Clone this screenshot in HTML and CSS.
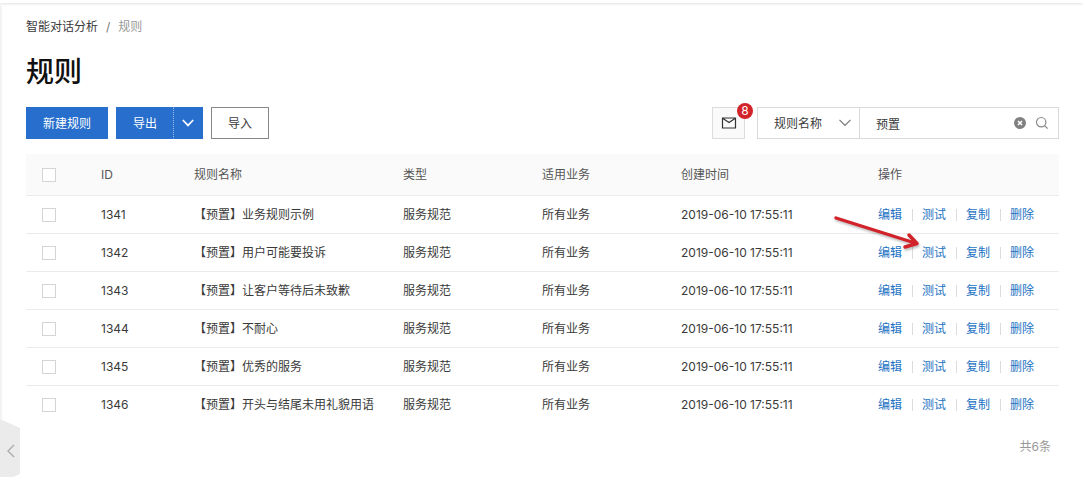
FILE: index.html
```html
<!DOCTYPE html>
<html lang="zh-CN">
<head>
    <meta charset="utf-8">
    <title>规则 - 智能对话分析</title>
    <link rel="stylesheet" href="styles.css">
</head>
<body>
    <div class="topbar"></div>
    <main class="page">
        <nav class="breadcrumb">
            <a href="#">智能对话分析</a>
            <span class="slash">/</span>
            <span>规则</span>
        </nav>

        <h1>规则</h1>

        <div class="toolbar">
            <button type="button" class="btn btn-primary">新建规则</button>
            <div class="split">
                <button type="button" class="btn btn-primary btn-export">导出</button>
                <button type="button" class="btn btn-primary btn-arrow" aria-label="更多导出">
                    <svg width="12" height="8" viewBox="0 0 12 8"><path d="M.8 1l5.200 5.400L11.200 1" fill="none" stroke="#fff" stroke-width="1.700"/></svg>
                </button>
            </div>
            <button type="button" class="btn btn-default">导入</button>

            <button type="button" class="btn-mail" aria-label="消息">
                <svg width="16" height="12" viewBox="0 0 16 12"><path d="M1.500 1h13v10h-13zM2 1.500L8 5.500l6-4" fill="none" stroke="#333" stroke-width="1.200"/></svg>
                <span class="badge">8</span>
            </button>

            <form class="search">
                <div class="select-box">
                    <select aria-label="搜索字段">
                        <option>规则名称</option>
                    </select>
                    <svg class="caret" width="12" height="8" viewBox="0 0 12 8"><path d="M.5 .8L6 6.500 11.500 .8" fill="none" stroke="#777" stroke-width="1.200"/></svg>
                </div>
                <div class="input-box">
                    <input type="text" value="预置" aria-label="关键词">
                    <button type="button" class="icon-btn" aria-label="清空">
                        <svg width="12" height="12" viewBox="0 0 12 12"><circle cx="6" cy="6" r="6" fill="#808080"/><path d="M4 4l4 4M8 4L4 8" stroke="#fff" stroke-width="1.600"/></svg>
                    </button>
                    <button type="button" class="icon-btn" aria-label="搜索">
                        <svg width="14" height="14" viewBox="0 0 14 14"><circle cx="6.200" cy="6.200" r="4.700" fill="none" stroke="#888" stroke-width="1.200"/><path d="M9.600 9.600l3 3" stroke="#888" stroke-width="1.300"/></svg>
                    </button>
                </div>
            </form>
        </div>

        <table class="rules">
            <colgroup>
                <col class="col-check">
                <col class="col-id">
                <col class="col-name">
                <col class="col-type">
                <col class="col-biz">
                <col class="col-time">
                <col class="col-ops">
            </colgroup>
            <thead>
                <tr>
                    <th><input type="checkbox" aria-label="全选"></th>
                    <th>ID</th>
                    <th>规则名称</th>
                    <th>类型</th>
                    <th>适用业务</th>
                    <th>创建时间</th>
                    <th>操作</th>
                </tr>
            </thead>
            <tbody>
                <tr>
                    <td><input type="checkbox" aria-label="1341"></td>
                    <td>1341</td>
                    <td>【预置】业务规则示例</td>
                    <td>服务规范</td>
                    <td>所有业务</td>
                    <td>2019-06-10 17:55:11</td>
                    <td><div class="ops"><a href="#">编辑</a><a href="#">测试</a><a href="#">复制</a><a href="#">删除</a></div></td>
                </tr>
                <tr>
                    <td><input type="checkbox" aria-label="1342"></td>
                    <td>1342</td>
                    <td>【预置】用户可能要投诉</td>
                    <td>服务规范</td>
                    <td>所有业务</td>
                    <td>2019-06-10 17:55:11</td>
                    <td class="marked">
                        <div class="ops"><a href="#">编辑</a><a href="#">测试</a><a href="#">复制</a><a href="#">删除</a></div>
                        <svg class="pointer" width="92" height="40" viewBox="0 0 92 40"><path d="M6 6L85 31M79 23L87 31.500L75 35" fill="none" stroke="#d2232a" stroke-width="3.400" stroke-linecap="round" stroke-linejoin="round"/></svg>
                    </td>
                </tr>
                <tr>
                    <td><input type="checkbox" aria-label="1343"></td>
                    <td>1343</td>
                    <td>【预置】让客户等待后未致歉</td>
                    <td>服务规范</td>
                    <td>所有业务</td>
                    <td>2019-06-10 17:55:11</td>
                    <td><div class="ops"><a href="#">编辑</a><a href="#">测试</a><a href="#">复制</a><a href="#">删除</a></div></td>
                </tr>
                <tr>
                    <td><input type="checkbox" aria-label="1344"></td>
                    <td>1344</td>
                    <td>【预置】不耐心</td>
                    <td>服务规范</td>
                    <td>所有业务</td>
                    <td>2019-06-10 17:55:11</td>
                    <td><div class="ops"><a href="#">编辑</a><a href="#">测试</a><a href="#">复制</a><a href="#">删除</a></div></td>
                </tr>
                <tr>
                    <td><input type="checkbox" aria-label="1345"></td>
                    <td>1345</td>
                    <td>【预置】优秀的服务</td>
                    <td>服务规范</td>
                    <td>所有业务</td>
                    <td>2019-06-10 17:55:11</td>
                    <td><div class="ops"><a href="#">编辑</a><a href="#">测试</a><a href="#">复制</a><a href="#">删除</a></div></td>
                </tr>
                <tr>
                    <td><input type="checkbox" aria-label="1346"></td>
                    <td>1346</td>
                    <td>【预置】开头与结尾未用礼貌用语</td>
                    <td>服务规范</td>
                    <td>所有业务</td>
                    <td>2019-06-10 17:55:11</td>
                    <td><div class="ops"><a href="#">编辑</a><a href="#">测试</a><a href="#">复制</a><a href="#">删除</a></div></td>
                </tr>
            </tbody>
        </table>

        <div class="total">共6条</div>
    </main>

    <button type="button" class="collapse" aria-label="展开菜单">
        <svg width="8" height="14" viewBox="0 0 8 14"><path d="M7 1L1 7l6 6" fill="none" stroke="#b0b0b0" stroke-width="1.500"/></svg>
    </button>
</body>
</html>
```

FILE: styles.css
```css
* {
    box-sizing: border-box;
}

body {
    margin: 0;
    background: #fff;
    color: #3a3a3a;
    font-family: Inter, "Noto Sans CJK SC", sans-serif;
    font-size: 12px;
    line-height: 18px;
}

button, input, select {
    font: inherit;
    color: inherit;
    margin: 0;
}

button {
    cursor: pointer;
}

a {
    color: #2272c3;
    text-decoration: none;
}

svg {
    display: block;
}

.topbar {
    height: 3px;
    background: #fff;
    box-shadow: 0 1px 3px rgba(0, 0, 0, 0.12);
}

.page {
    border-left: 2px solid #f3f3f3;
    padding: 15px 24px 20px;
}

.breadcrumb {
    display: flex;
    gap: 8px;
    color: #999;
}

.breadcrumb a {
    color: #3a3a3a;
}

.slash {
    color: #777;
}

h1 {
    margin: 16px 0 14px;
    font-size: 28px;
    font-weight: 500;
    line-height: 41px;
    color: #111;
}

.toolbar {
    display: flex;
    align-items: center;
    gap: 8px;
    margin-bottom: 15px;
}

.btn {
    height: 32px;
    padding: 1px 16px 0;
    border: 1px solid #888;
    border-radius: 0;
    background: #fff;
}

.btn-primary {
    border-color: #286fcd;
    background: #286fcd;
    color: #fff;
}

.split {
    display: flex;
}

.btn-export {
    border-right: 0;
}

.btn-arrow {
    padding: 0 8px;
    border-left: 1px dotted #9dbfec;
}

.btn-mail {
    position: relative;
    display: flex;
    align-items: center;
    justify-content: center;
    width: 33px;
    height: 32px;
    margin-left: auto;
    margin-right: 4px;
    padding: 0;
    border: 1px solid #dcdcdc;
    background: #fafafa;
}

.badge {
    position: absolute;
    top: -5px;
    right: -9px;
    width: 16px;
    height: 16px;
    border-radius: 8px;
    background: #d2232a;
    color: #fff;
    line-height: 16px;
    text-align: center;
}

.search {
    display: flex;
    height: 32px;
    border: 1px solid #d9d9d9;
}

.select-box {
    position: relative;
    border-right: 1px solid #d9d9d9;
}

.select-box select {
    appearance: none;
    width: 101px;
    height: 30px;
    padding: 1px 16px 0;
    border: 0;
    border-radius: 0;
    background: transparent;
}

.caret {
    position: absolute;
    top: 11px;
    right: 8px;
    pointer-events: none;
}

.input-box {
    display: flex;
    align-items: center;
    gap: 9px;
    padding: 0 9px 0 16px;
}

.input-box input {
    width: 129px;
    height: 30px;
    padding: 0;
    border: 0;
    outline: 0;
    background: transparent;
}

.icon-btn {
    padding: 0;
    border: 0;
    background: none;
}

.rules {
    width: 100%;
    table-layout: fixed;
    border-collapse: separate;
    border-spacing: 0;
}

.col-check { width: 59px; }
.col-id { width: 93px; }
.col-name { width: 209px; }
.col-type { width: 139px; }
.col-biz { width: 139px; }
.col-time { width: 197px; }
.col-ops { width: 197px; }

.rules th,
.rules td {
    height: 38px;
    padding: 0 16px;
    border-bottom: 1px solid #ebebeb;
    text-align: left;
    white-space: nowrap;
}

.rules th {
    height: 42px;
    background: #fafafa;
    color: #555;
    font-weight: 400;
}

.rules tbody tr:last-child td {
    border-bottom: 0;
}

.rules input {
    appearance: none;
    display: block;
    width: 14px;
    height: 14px;
    border: 1px solid #d5d5d5;
    background: #fff;
}

.rules input:checked {
    background: #286fcd;
}

.ops {
    display: flex;
    align-items: center;
}

.ops a + a {
    margin-left: 10px;
    padding-left: 9px;
    border-left: 1px solid #dcdcdc;
    line-height: 12px;
}

.marked {
    position: relative;
}

.pointer {
    position: absolute;
    top: -22px;
    left: -32px;
    filter: drop-shadow(1px 2px 1px rgba(0, 0, 0, 0.25));
    pointer-events: none;
}

.total {
    margin-top: 14px;
    padding-right: 8px;
    color: #999;
    text-align: right;
}

.collapse {
    position: fixed;
    left: 0;
    bottom: -6px;
    display: flex;
    align-items: center;
    width: 20px;
    height: 64px;
    padding: 0 0 0 7px;
    border: 0;
    background: #ebebeb;
    clip-path: polygon(0 0, 100% 14%, 100% 86%, 0 100%);
}
```
